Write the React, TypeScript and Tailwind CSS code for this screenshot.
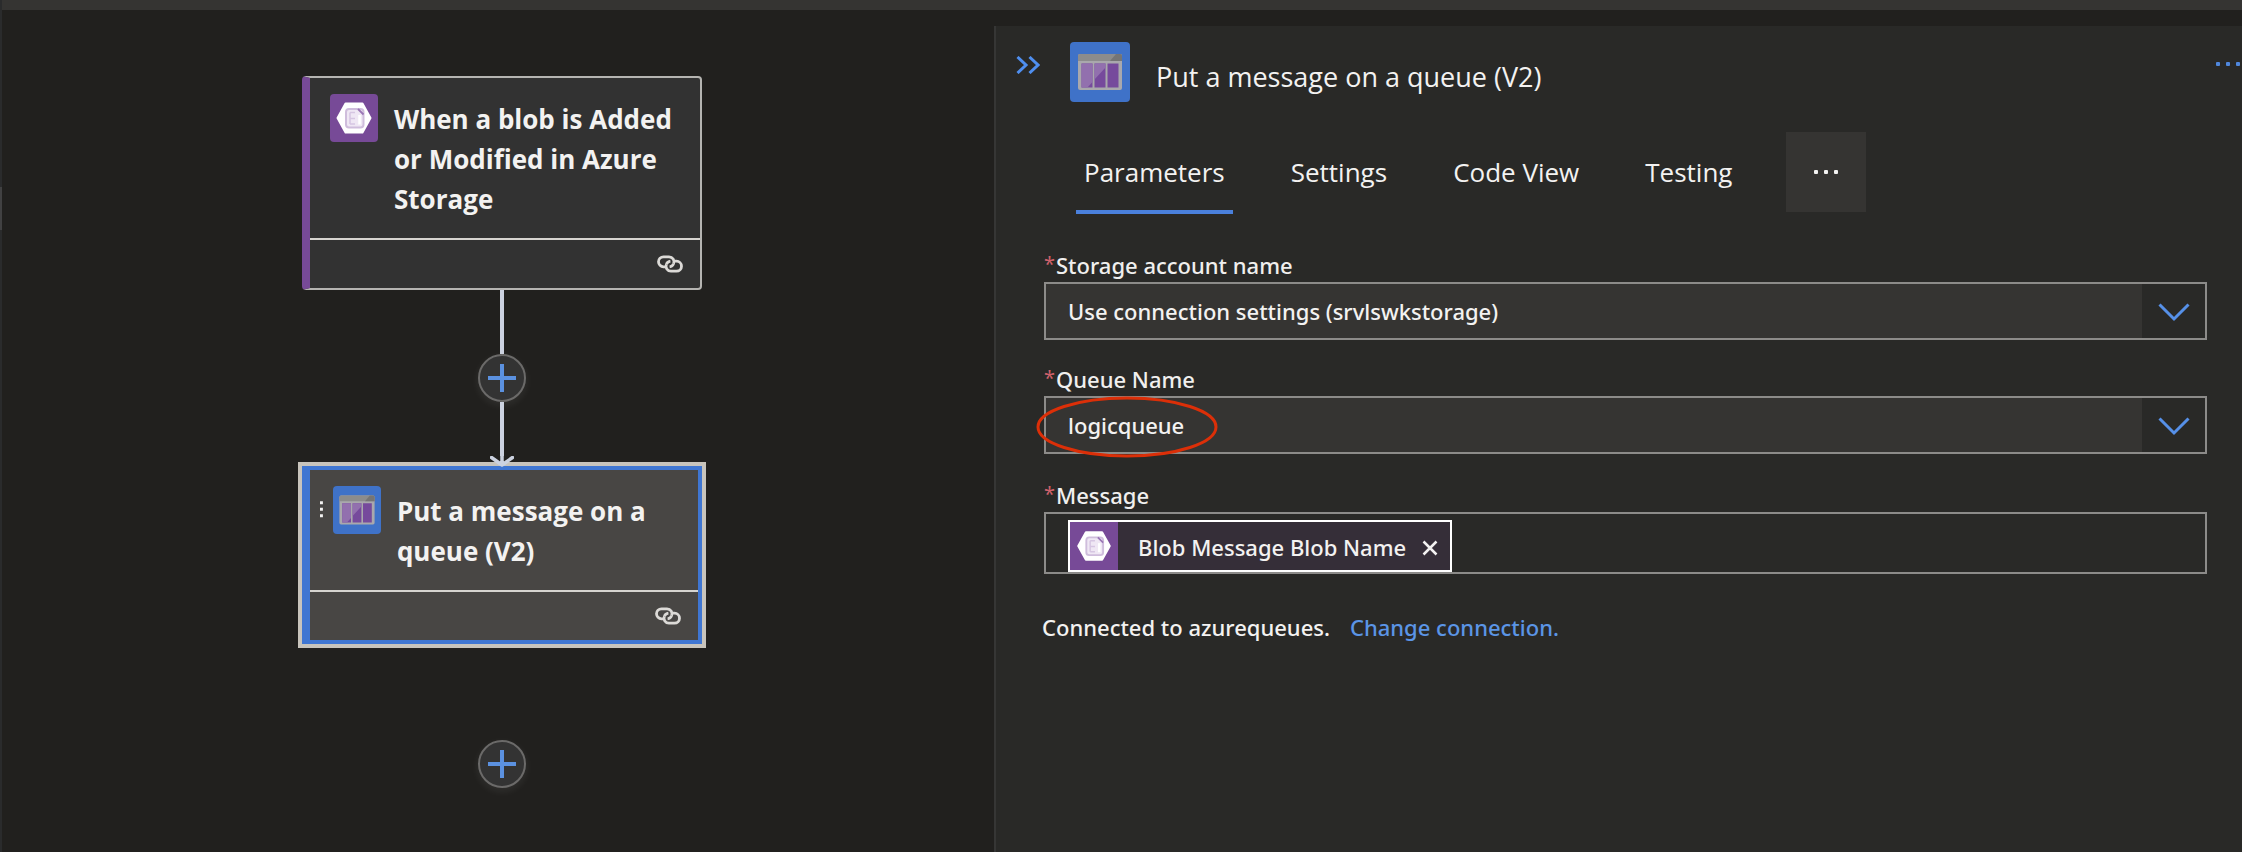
import type { ReactNode } from "react";

function BlobIcon({ className }: { className: string }) {
  return (
    <svg viewBox="0 0 48 48" className={className} aria-hidden="true">
      <path d="M15.500 9.500h17L40.500 24l-8 14.500h-17L7.500 24z" fill="#fff" stroke="#fff" strokeWidth="2" strokeLinejoin="round" />
      <rect x="16" y="15" width="17.500" height="18.500" rx="3" fill="#efe7f4" stroke="#cfbddc" strokeWidth="2" />
      <path d="M20 18.500v11.500M20 18.500h5M20 24.500h5M20 30h5" fill="none" stroke="#d6c6e2" strokeWidth="1.500" />
      <path d="M29.500 21v9.500" fill="none" stroke="#fff" strokeWidth="2.500" />
      <path d="M28 15l5.500 5.500" fill="none" stroke="#9a76b5" strokeWidth="1.800" />
    </svg>
  );
}

function QueueIcon({ className }: { className: string }) {
  return (
    <svg viewBox="0 0 60 60" className={className} aria-hidden="true">
      <rect x="8" y="12" width="44" height="36" rx="2" fill="#a9a8ac" />
      <path d="M10 12h40a2 2 0 0 1 2 2v5H8v-5a2 2 0 0 1 2-2z" fill="#8c8c8c" />
      <path d="M46 12h4a2 2 0 0 1 2 2v5H40z" fill="#757575" />
      <path d="M11.500 21.500h11v24h-11zM24.500 21.500h11v24h-11zM37.500 21.500h11v24h-11z" fill="#764a9c" />
      <path d="M11.500 21.500h11v18.500l-5 5.500h-6zM24.500 21.500h11v4l-11 12z" fill="#9270ae" />
    </svg>
  );
}

function LinkIcon({ className }: { className: string }) {
  return (
    <svg viewBox="0 0 28 18" className={className} fill="none" stroke="#dcdad7" strokeWidth="2.800" aria-hidden="true">
      <path d="M9.500 11.800H7.500a5 5 0 0 1 0-10h5.500a5 5 0 0 1 4.600 7" />
      <path d="M18.500 6.200h2a5 5 0 0 1 0 10H15a5 5 0 0 1-4.600-7" />
      <path d="M10.400 9.200a5 5 0 0 1 4-3M17.600 8.800a5 5 0 0 1-4 3" />
    </svg>
  );
}

function AddButton({ label }: { label: string }) {
  return (
    <button
      type="button"
      aria-label={label}
      className="flex size-12 shrink-0 items-center justify-center rounded-full border-2 border-[#6b6a69] bg-[#333333] shadow-[0_3px_8px_rgba(255,255,255,0.08)]"
    >
      <svg viewBox="0 0 28 28" className="size-7" stroke="#5b91e0" strokeWidth="4" aria-hidden="true">
        <path d="M14 0v28M0 14h28" />
      </svg>
    </button>
  );
}

function Dots({ className }: { className: string }) {
  return (
    <svg viewBox="0 0 24 4" className={className} fill="currentColor" aria-hidden="true">
      <rect x="0" width="4" height="4" rx="1" />
      <rect x="10" width="4" height="4" rx="1" />
      <rect x="20" width="4" height="4" rx="1" />
    </svg>
  );
}

function FieldLabel({ htmlFor, children }: { htmlFor: string; children: ReactNode }) {
  return (
    <label htmlFor={htmlFor} className="flex h-8 font-['Noto_Sans',sans-serif] text-[22px] leading-[30px] font-medium text-[#f0efee]">
      <span className="w-3 shrink-0 text-xl leading-7 font-normal text-[#d0616b]">*</span>
      {children}
    </label>
  );
}

function SelectBox({ id, value }: { id: string; value: string }) {
  return (
    <div className="flex h-[58px] border-2 border-[#8c8b89]">
      <select
        id={id}
        defaultValue={value}
        className="min-w-0 flex-1 appearance-none bg-[#353432] px-[22px] font-['Noto_Sans',sans-serif] text-[22px] font-medium text-[#f3f2f1] outline-none"
      >
        <option>{value}</option>
      </select>
      <span className="pointer-events-none flex w-[63px] items-center justify-center pt-0.5">
        <svg viewBox="0 0 32 20" className="h-5 w-8" fill="none" stroke="#5690e8" strokeWidth="3" aria-hidden="true">
          <path d="M1.500 2.500 16 17 30.500 2.500" />
        </svg>
      </span>
    </div>
  );
}

const tabs = ["Parameters", "Settings", "Code View", "Testing"];

export default function App() {
  return (
    <div className="flex min-h-screen bg-[#21201e] font-['Open_Sans','Noto_Sans',sans-serif] text-[#f3f2f1]">
      <div className="w-0.5 shrink-0 bg-[#2a2b2c] pt-[187px]">
        <div className="h-[43px] bg-[#414142]" />
      </div>
      <div className="flex min-w-0 flex-1 flex-col">
        <div className="h-2.5 bg-[#353432]" />
        <div className="grid flex-1 grid-cols-[31fr_39fr]">
          <main className="flex flex-col items-center pt-[66px] pl-2">
            <section className="w-[400px] rounded-sm border-2 border-l-8 border-[#b5b4b1] border-l-[#774a97] bg-[#323232]">
              <div className="flex h-[162px] gap-4 border-b-2 border-[#d6d4d0] pt-4 pr-4 pl-5">
                <span className="size-12 shrink-0 rounded-sm bg-[#774a97]">
                  <BlobIcon className="size-12" />
                </span>
                <h2 className="pt-[5px] text-[26px] leading-10 font-bold">
                  When a blob is Added or Modified in Azure Storage
                </h2>
              </div>
              <div className="flex h-12 items-center justify-end pr-4">
                <LinkIcon className="h-[18px] w-7" />
              </div>
            </section>

            <div className="flex flex-col items-center">
              <div className="h-16 w-1 bg-[#ccd2e0]" />
              <AddButton label="Add a step between" />
              <div className="h-[54px] w-1 bg-[#ccd2e0]" />
              <svg viewBox="0 0 24 12" className="relative z-10 -mb-2.5 h-3 w-6" fill="none" stroke="#ccd2e0" strokeWidth="3.500" aria-hidden="true">
                <path d="M1.500 1.500 12 9 22.500 1.500M12 0v9" strokeLinecap="round" strokeLinejoin="round" />
              </svg>
            </div>

            <section className="mt-1 w-[408px] border-4 border-[#c8c4bc]">
              <div className="border-4 border-l-8 border-[#3f76d2] bg-[#484644]">
                <div className="flex h-[122px] border-b-2 border-[#d6d4d0] pt-4 pr-4 pl-2.5">
                  <svg viewBox="0 0 4 24" className="mt-3 mr-2.5 h-6 w-1" fill="#f3f2f1" aria-hidden="true">
                    <path d="M0 0h4v4H0zM0 9h4v4H0zM0 18h4v4H0z" />
                  </svg>
                  <span className="mr-4 size-12 shrink-0 rounded-sm bg-[#3f72c8]">
                    <QueueIcon className="size-12" />
                  </span>
                  <h2 className="pt-[5px] text-[26px] leading-10 font-bold">Put a message on a queue (V2)</h2>
                </div>
                <div className="flex h-12 items-center justify-end pr-4">
                  <LinkIcon className="h-[18px] w-7" />
                </div>
              </div>
            </section>

            <div className="pt-[92px]">
              <AddButton label="Add a step" />
            </div>
          </main>

          <aside className="mt-4 border-l-2 border-[#363635] bg-[#292927]">
            <header className="flex items-start pt-4 pr-0.5 pl-5">
              <button type="button" aria-label="Collapse panel" className="mt-3.5 mr-[30px]">
                <svg viewBox="0 0 24 18" className="h-[18px] w-6" fill="none" stroke="#4f8ff0" strokeWidth="3" aria-hidden="true">
                  <path d="M1.500 1 10 9 1.500 17M13.500 1 22 9 13.500 17" />
                </svg>
              </button>
              <span className="size-[60px] rounded-sm bg-[#3f72c8]">
                <QueueIcon className="size-[60px]" />
              </span>
              <h1 className="pt-[17px] pl-[26px] text-[27px] leading-9">Put a message on a queue (V2)</h1>
              <button type="button" aria-label="More actions" className="mt-5 ml-auto text-[#4f87dd]">
                <Dots className="h-1 w-6" />
              </button>
            </header>

            <nav className="mt-[30px] flex h-[82px] items-start pl-20">
              <div role="tablist" className="flex h-full gap-[50px]">
                {tabs.map((tab, i) => (
                  <button
                    key={tab}
                    type="button"
                    role="tab"
                    aria-selected={i === 0}
                    className={
                      i === 0
                        ? "border-b-4 border-[#4a80dc] px-2 pt-0.5 text-[26px]"
                        : "border-b-4 border-transparent px-2 pt-0.5 text-[26px]"
                    }
                  >
                    {tab}
                  </button>
                ))}
              </div>
              <button type="button" aria-label="More tabs" className="ml-[46px] flex h-20 w-20 items-center justify-center bg-[#353432]">
                <Dots className="h-1 w-6" />
              </button>
            </nav>

            <form className="pt-9 pr-[35px] pl-12">
              <FieldLabel htmlFor="storage">Storage account name</FieldLabel>
              <SelectBox id="storage" value="Use connection settings (srvlswkstorage)" />

              <div className="h-6" />
              <FieldLabel htmlFor="queue">Queue Name</FieldLabel>
              <div className="relative">
                <SelectBox id="queue" value="logicqueue" />
                <svg
                  viewBox="0 0 182 62"
                  className="pointer-events-none absolute top-0 -left-2 h-[62px] w-[182px]"
                  fill="none"
                  stroke="#dc2f08"
                  strokeWidth="3"
                  aria-hidden="true"
                >
                  <ellipse cx="91" cy="31" rx="89" ry="29" />
                </svg>
              </div>

              <div className="h-[26px]" />
              <FieldLabel htmlFor="message">Message</FieldLabel>
              <div className="flex h-[62px] border-2 border-[#8c8b89] pt-1.5 pl-[22px]">
                <span className="flex h-[52px] items-center border-2 border-white bg-[#352e38] pr-3">
                  <span className="flex h-12 w-12 items-center bg-[#774a97]">
                    <BlobIcon className="h-[46px] w-12" />
                  </span>
                  <span className="pt-0.5 pl-5 font-['Noto_Sans',sans-serif] text-[22px] font-medium">Blob Message Blob Name</span>
                  <button type="button" aria-label="Remove Blob Message Blob Name" className="ml-4 pt-1">
                    <svg viewBox="0 0 16 16" className="size-4" stroke="#f3f2f1" strokeWidth="2.500" aria-hidden="true">
                      <path d="M1.500 1.500l13 13M14.500 1.500l-13 13" />
                    </svg>
                  </button>
                </span>
                <input id="message" type="text" className="min-w-0 flex-1 bg-transparent px-2 font-['Noto_Sans',sans-serif] text-[22px] font-medium outline-none" />
              </div>
            </form>

            <p className="flex gap-5 pt-[35px] pl-[46px] font-['Noto_Sans',sans-serif] text-[22px] leading-9 font-medium">
              <span>Connected to azurequeues.</span>
              <a href="#change" className="text-[#5b95e6]">Change connection.</a>
            </p>
          </aside>
        </div>
      </div>
    </div>
  );
}
